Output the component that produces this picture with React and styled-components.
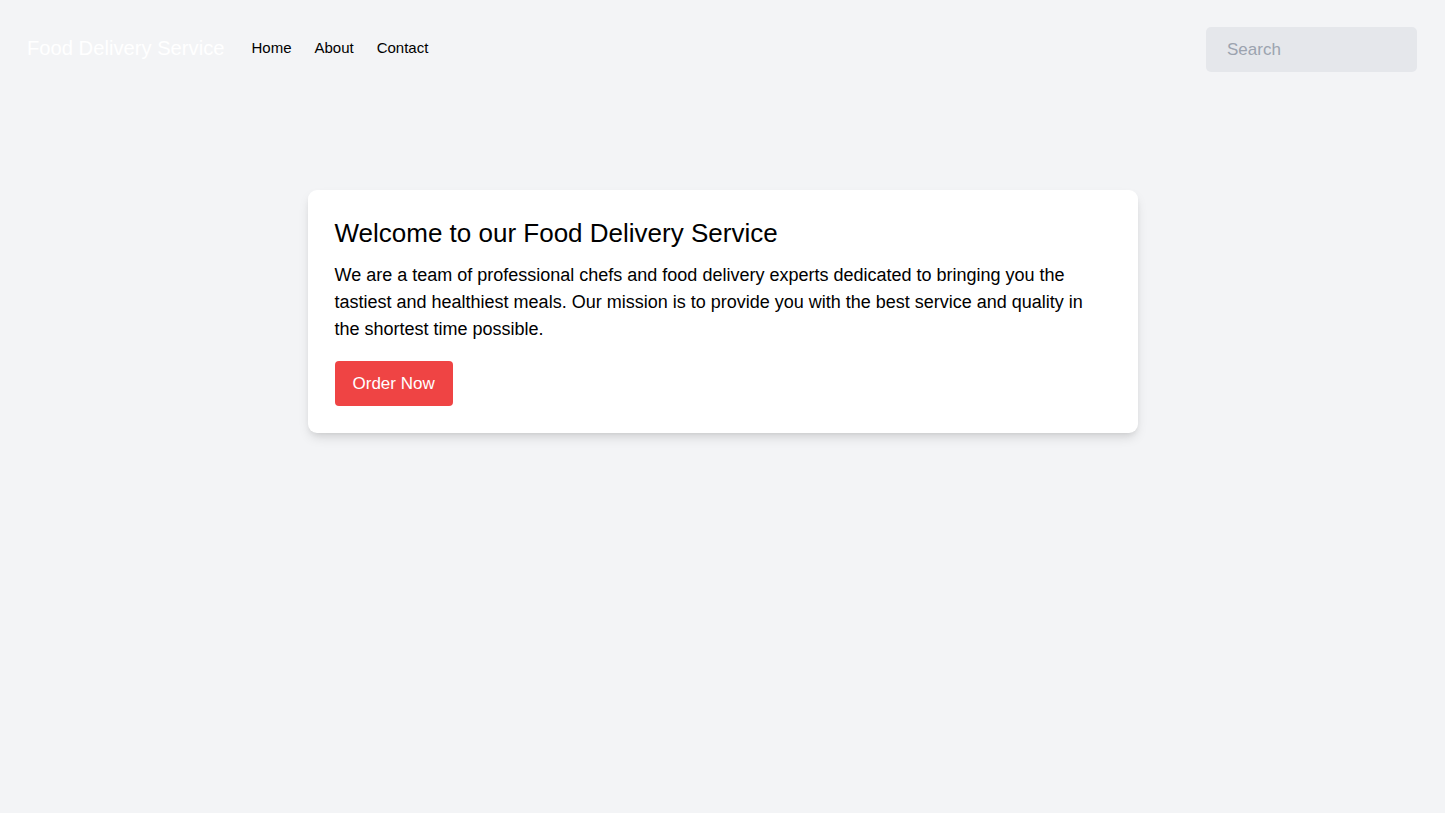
import React from "react";
import styled, { createGlobalStyle } from "styled-components";

const GlobalStyle = createGlobalStyle`
  html, body {
    margin: 0;
    padding: 0;
    background: #f3f4f6;
    font-family: "Liberation Sans", Arial, sans-serif;
    color: #000;
  }
  * {
    box-sizing: border-box;
  }
`;

const Page = styled.div`
  min-height: 813px;
  background: #f3f4f6;
`;

// Header
const Header = styled.header`
  display: flex;
  align-items: center;
  justify-content: space-between;
  padding: 27px 28px 27px 27px;
`;

const Left = styled.div`
  display: flex;
  align-items: center;
  padding-bottom: 4px;
`;

const Logo = styled.a`
  font-size: 20.2px;
  line-height: 28px;
  color: #fff;
  text-decoration: none;
  margin-right: 27px;
`;

const Nav = styled.nav`
  display: flex;
  gap: 23px;
`;

const NavLink = styled.a`
  font-size: 15px;
  line-height: 20px;
  color: #000;
  text-decoration: none;
`;

const SearchInput = styled.input`
  width: 211px;
  height: 45px;
  border: none;
  outline: none;
  border-radius: 5px;
  background: #e5e7eb;
  padding: 0 21px;
  font-family: inherit;
  font-size: 17px;
  color: #111;

  &::placeholder {
    color: #9ca3af;
  }
`;

// Main card
const Main = styled.main`
  display: flex;
  justify-content: center;
  padding-top: 91px;
`;

const Card = styled.section`
  width: 830px;
  background: #fff;
  border-radius: 9px;
  padding: 25px 27px 27px;
  box-shadow: 0 6px 12px -2px rgba(0, 0, 0, 0.13), 0 3px 6px -3px rgba(0, 0, 0, 0.1);
`;

const Title = styled.h1`
  margin: 0 0 11px;
  font-size: 26px;
  line-height: 36px;
  font-weight: 400;
`;

const Text = styled.p`
  margin: 0 0 18px;
  font-size: 18px;
  line-height: 27px;
`;

const OrderButton = styled.button`
  background: #ef4444;
  color: #fff;
  border: none;
  border-radius: 4px;
  padding: 9px 18px;
  font-family: inherit;
  font-size: 17px;
  line-height: 27px;
  cursor: pointer;
`;

export default function App() {
  return (
    <Page>
      <GlobalStyle />
      <Header>
        <Left>
          <Logo href="#">Food Delivery Service</Logo>
          <Nav>
            <NavLink href="#">Home</NavLink>
            <NavLink href="#">About</NavLink>
            <NavLink href="#">Contact</NavLink>
          </Nav>
        </Left>
        <SearchInput type="text" placeholder="Search" />
      </Header>

      <Main>
        <Card>
          <Title>Welcome to our Food Delivery Service</Title>
          <Text>
            We are a team of professional chefs and food delivery experts dedicated to
            bringing you the tastiest and healthiest meals. Our mission is to provide you
            with the best service and quality in the shortest time possible.
          </Text>
          <OrderButton>Order Now</OrderButton>
        </Card>
      </Main>
    </Page>
  );
}
